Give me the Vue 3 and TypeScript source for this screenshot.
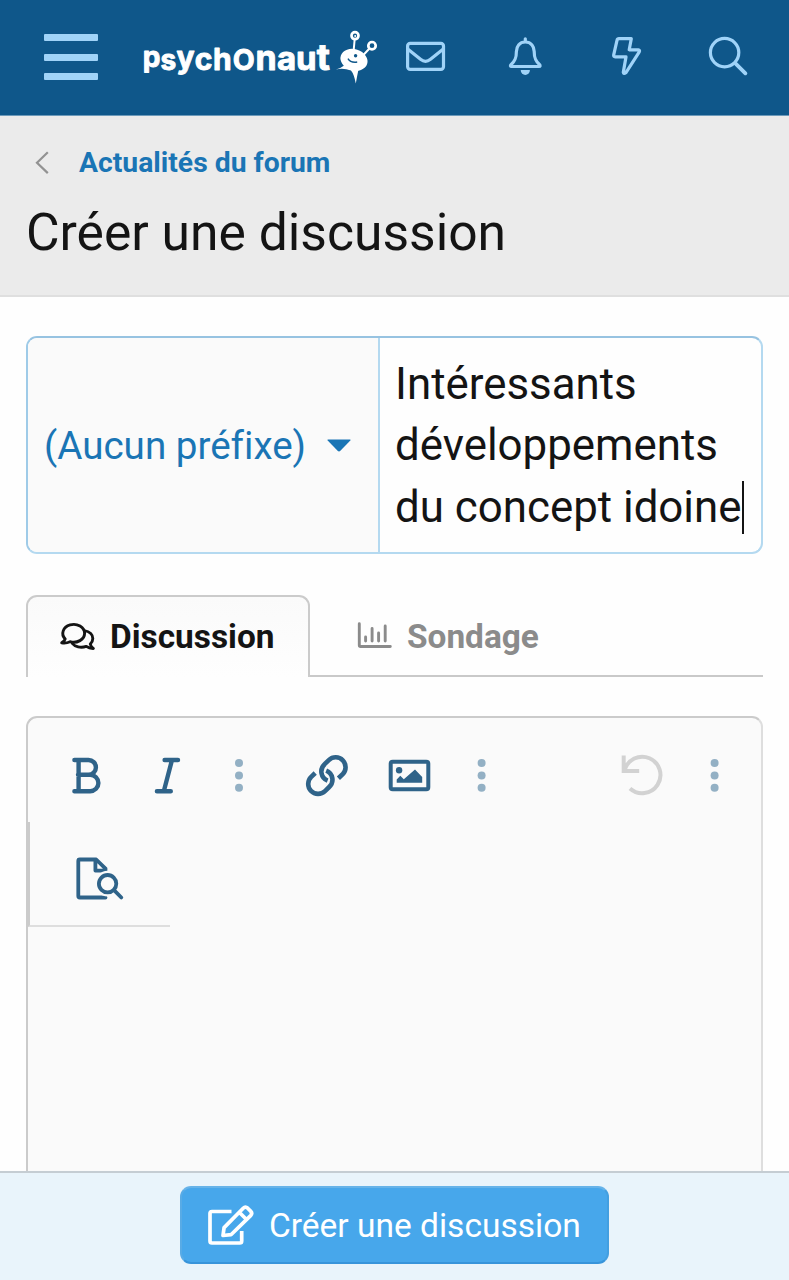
<script setup lang="ts">
import { ref } from 'vue'

const forumName = 'Actualités du forum'
const pageTitle = 'Créer une discussion'
const titleLines = ref<string[]>(['Intéressants', 'développements', 'du concept idoine'])
const logoLetters = [
  { ch: 'p', x: 142.8, y: 67, size: 28 },
  { ch: 's', x: 160.4, y: 70, size: 28 },
  { ch: 'y', x: 176.6, y: 67.6, size: 30 },
  { ch: 'c', x: 194.8, y: 70, size: 30 },
  { ch: 'h', x: 213, y: 69.6, size: 30 },
  { ch: 'O', x: 232.8, y: 70, size: 28.5 },
  { ch: 'n', x: 255.4, y: 70, size: 34 },
  { ch: 'a', x: 277, y: 70, size: 33 },
  { ch: 'u', x: 296, y: 70, size: 33 },
  { ch: 't', x: 316.8, y: 70.4, size: 36 },
]
</script>

<template>
  <div class="page">
    <header class="topbar">
      <button class="menu" aria-label="Menu"><i /><i /><i /></button>
      <svg class="logo" viewBox="140 25 242 64">
        <text class="wordmark"><tspan v-for="l in logoLetters" :key="l.x" :x="l.x" :y="l.y" :font-size="l.size">{{ l.ch }}</tspan></text>
        <g fill="#fff">
          <ellipse cx="354" cy="59.8" rx="13.8" ry="10.6" transform="rotate(18 354 59.8)" />
          <path d="M345 65 Q341 68 336 69.5 Q343 67.5 351 70.5 Q354 74 355.8 83.5 Q357.3 75 358.6 69 Z" />
        </g>
        <g fill="none" stroke="#fff" stroke-width="2.7">
          <circle cx="355" cy="35.7" r="3.5" /><circle cx="372" cy="45.7" r="3.7" />
          <path d="M353.6 51 354.6 40M362.5 56 369.2 48.7" stroke-width="2" />
        </g>
        <circle cx="355.2" cy="36" r="1" fill="#fff" />
        <circle cx="355.6" cy="55.8" r="1.7" fill="#0f578a" />
        <path d="M348 58.6 Q350.5 63 357.2 62" fill="none" stroke="#0f578a" stroke-width="1.5" />
      </svg>
      <nav class="actions">
        <svg class="mail" viewBox="405 36 42 40">
          <rect x="407.6" y="43.4" width="35.9" height="26" rx="2.6" />
          <path d="M408 49.2 420.5 59.3 Q425.5 63.3 430.5 59.3 L443 49.2" />
        </svg>
        <svg class="bell" viewBox="505 36 42 40">
          <path d="M525.3 42c-6 0-8.9 4.6-8.9 9.5 0 6.7-1.4 9.6-5.2 13-1.2 1.2-.8 2 .4 2h27.4c1.2 0 1.6-.8.4-2-3.8-3.4-5.2-6.3-5.2-13 0-4.9-2.9-9.5-8.9-9.5zM525.3 42v-3.2" />
          <path class="solid" d="M520.7 70h9.2a4.6 5 0 0 1-9.2 0z" />
        </svg>
        <svg class="bolt" viewBox="606 36 42 40">
          <path d="M618.9 38.7H631.3L629.2 49.8H638.2Q640.2 50.2 639.3 51.8L625.8 72.8Q623.6 74.4 623.3 72.2L626 56.9H615.3Q613.3 56.7 613.7 54.8L617 40.3Q617.4 38.7 618.9 38.7Z" />
        </svg>
        <svg class="find" viewBox="707 36 42 40">
          <circle cx="724.6" cy="52.6" r="14.2" /><path d="M735.4 63.4 745.4 73.3" stroke-width="3.8" />
        </svg>
      </nav>
    </header>

    <section class="heading">
      <a class="crumb">
        <svg viewBox="35 150 15 25"><path d="M47.8 152.3 37 162.7 47.8 173.1" /></svg>
        <span>{{ forumName }}</span>
      </a>
      <h1>{{ pageTitle }}</h1>
    </section>

    <main class="content">
      <div class="title-field">
        <div class="prefix">
          <span>(Aucun préfixe)</span>
          <svg viewBox="0 0 24 13"><path d="M1 .5H23Q24 .7 23.3 1.6L13.4 11.8Q12 13 10.6 11.8L.7 1.6Q0 .7 1 .5Z" /></svg>
        </div>
        <div class="subject">
          <div v-for="(line, i) in titleLines" :key="line" class="line">
            {{ line }}<i v-if="i === titleLines.length - 1" class="cursor" />
          </div>
        </div>
      </div>

      <div class="tabs">
        <div class="tab active">
          <svg viewBox="59 620 36 30">
            <path d="M61.7 641.8 Q64.7 640 65.2 637.9 A10.9 8.9 0 1 1 70 640.7 Q66 642.6 61.7 641.8Z" />
            <path d="M84.3 629.6C90 630.5 92.8 634 92.8 637.5Q92.8 640.7 90.3 643 Q90.8 645.8 93.3 647.5 Q89.3 647.6 86.3 645.4C80.5 647.4 75 645.6 72.3 642.3" />
          </svg>
          <span>Discussion</span>
        </div>
        <div class="tab">
          <svg viewBox="356 620 36 30"><path d="M359.3 623.8V645.3Q359.3 646.5 360.5 646.5H390.3M365.6 637V641M372.1 628.5V641M378.6 633V641M385.2 626V641" /></svg>
          <span>Sondage</span>
        </div>
      </div>

      <div class="editor">
        <div class="toolbar">
          <svg class="tools" viewBox="28 718 733 104">
            <g class="ink">
              <path class="letter" d="M74.4 760H88.5a7.4 7.4 0 0 1 0 14.8H78M88.5 774.8H90.2a8.2 8.2 0 0 1 0 16.4H74.4M78.6 760V791.2" />
              <path class="letter" d="M164.6 760H178M156.9 791.2H170.8M172 760 163.8 791.2" />
              <path class="chain" d="M338.4 778.2 342.6 774.3A9.8 9.8 0 0 0 328.8 760.1L324.6 764.2A9.8 9.8 0 0 0 327.6 780.6M315.2 773 311.2 776.9A9.8 9.8 0 0 0 325 791.1L329.2 787A9.8 9.8 0 0 0 326.2 770.6" />
              <rect x="390.7" y="761.8" width="37.6" height="27.5" rx="2" />
              <path class="solid" d="M396.7 782.8V779.4L400.3 775.7 403.8 779.2 415 769.6 422.2 777V782.8Z" />
              <circle class="solid" cx="399.1" cy="770.3" r="3.2" />
            </g>
            <g class="dots">
              <g v-for="x in [239, 481.6, 714.6]" :key="x">
                <circle v-for="y in [763, 775.4, 787.7]" :key="y" :cx="x" :cy="y" r="4" />
              </g>
            </g>
            <path class="undo" d="M623.7 755.4V770.9H639.2M624.6 770.4A18.2 18.2 0 1 1 630 788.4" />
          </svg>
          <div class="preview">
            <svg viewBox="74 856 52 46">
              <path d="M105.5 897.5H79.8Q78.3 897.5 78.3 896V861Q78.3 859.5 79.8 859.5H96.2L105.5 868.6V870.6H95.4V860" />
              <circle class="halo" cx="107.6" cy="883.7" r="11" />
              <circle cx="107.6" cy="883.7" r="8.7" /><path d="M114 890.2 121.3 897.5" />
            </svg>
          </div>
        </div>
      </div>
    </main>

    <footer class="submitbar">
      <button class="submit">
        <svg viewBox="206 1203 50 44">
          <path d="M231.5 1211.5H212Q210 1211.5 210 1213.5V1241Q210 1243 212 1243H239.7Q241.7 1243 241.7 1241V1231" />
          <path d="M223 1235.5 224.1 1227.6 243.2 1208.2Q245.4 1206 247.7 1208.2L250.6 1211.1Q252.8 1213.3 250.6 1215.6L231 1234.7ZM239.5 1212.5 246 1219" />
        </svg>
        <span>{{ pageTitle }}</span>
      </button>
    </footer>
  </div>
</template>

<style>
html,
body {
  margin: 0;
  overflow: hidden;
}
</style>

<style scoped>
* {
  box-sizing: border-box;
}
.page {
  display: flex;
  flex-direction: column;
  width: 789px;
  height: 1280px;
  overflow: hidden;
  background: #fefefe;
  font-family: Roboto, "Liberation Sans", sans-serif;
  font-variant-ligatures: none;
  color: #141414;
}
svg {
  display: block;
  flex: none;
}
button {
  margin: 0;
  padding: 0;
  border: 0;
  background: none;
  font: inherit;
}
.topbar {
  display: flex;
  align-items: flex-start;
  flex: none;
  height: 116px;
  padding-left: 44px;
  background: #0f578a;
  border-bottom: 1px solid #6c9aba;
}
.menu {
  display: flex;
  flex-direction: column;
  justify-content: space-between;
  width: 54px;
  height: 46px;
  margin-top: 34px;
}
.menu i {
  height: 7px;
  border-radius: 1px;
  background: #a0d3f8;
}
.logo {
  width: 242px;
  height: 64px;
  margin: 25px 0 0 42px;
}
.wordmark {
  fill: #fff;
  stroke: #fff;
  stroke-width: 0.9;
  stroke-linejoin: round;
  font-family: Inter, sans-serif;
  font-weight: 700;
}
.actions {
  display: flex;
  gap: 59px;
  margin: 36px 0 0 23px;
}
.actions svg {
  width: 42px;
  height: 40px;
  fill: none;
  stroke: #a0d3f8;
  stroke-width: 3.2;
  stroke-linecap: round;
  stroke-linejoin: round;
}
.actions .mail {
  margin-right: -1px;
}
.actions .solid {
  fill: #a0d3f8;
  stroke: none;
}
.heading {
  flex: none;
  height: 181px;
  padding: 26px 26px 0 24px;
  background: #ebebeb;
  border-bottom: 2px solid #dfdfdf;
}
.crumb {
  display: flex;
  align-items: center;
  height: 40px;
  padding-left: 11px;
  gap: 29px;
  color: #1a75b5;
  font-size: 28.3px;
  font-weight: 700;
}
.crumb svg {
  width: 15px;
  height: 25px;
  fill: none;
  stroke: #929292;
  stroke-width: 2.2;
}
h1 {
  margin: 21px 0 0 2px;
  font-size: 51.6px;
  line-height: 60px;
  font-weight: 400;
}
.content {
  display: flex;
  flex-direction: column;
  flex: 1;
  min-height: 0;
  padding: 39px 26px 0;
}
.title-field {
  display: flex;
  flex: none;
  height: 218px;
  border: 2px solid #b4d9f0;
  border-top-color: #97c3e1;
  border-left-color: #9fcbe8;
  border-radius: 11px;
  overflow: hidden;
}
.prefix {
  display: flex;
  align-items: center;
  width: 352px;
  padding-left: 16px;
  gap: 21px;
  border-right: 2px solid #b4d9f0;
  background: #fafafa;
  color: #1a75b5;
  font-size: 38.6px;
}
.prefix svg {
  width: 24px;
  height: 13px;
  fill: #1a75b5;
}
.subject {
  flex: 1;
  padding: 16px 0 0 15px;
  font-size: 43.85px;
  line-height: 61.4px;
}
.line {
  display: flex;
  align-items: center;
  white-space: nowrap;
}
.cursor {
  width: 2px;
  height: 53px;
  background: #141414;
}
.tabs {
  display: flex;
  flex: none;
  height: 82px;
  margin-top: 41px;
  background: linear-gradient(#c9c9c9, #c9c9c9) right bottom / 453px 2px no-repeat;
}
.tab {
  display: flex;
  align-items: center;
  gap: 15px;
  padding-left: 46px;
  color: #8b8b8b;
  font-size: 33.4px;
  font-weight: 700;
}
.tab svg {
  width: 36px;
  height: 30px;
  margin-top: -2px;
  fill: none;
  stroke: currentColor;
  stroke-width: 2.9;
  stroke-linecap: round;
  stroke-linejoin: round;
}
.tab.active {
  width: 284px;
  padding: 0 0 2px 31px;
  border: 2px solid #cbcbcb;
  border-bottom: 0;
  border-radius: 11px 11px 0 0;
  background: linear-gradient(#fafafa, #fefefe);
  color: #141414;
}
.tab.active svg {
  margin-top: -1px;
}
.editor {
  flex: 1;
  margin-top: 39px;
  border: 2px solid #cbcbcb;
  border-right-color: #dedede;
  border-bottom: 0;
  border-radius: 11px 11px 0 0;
  background: #fafafa;
}
.tools {
  width: 733px;
  height: 104px;
}
.ink {
  fill: none;
  stroke: #2f6389;
  stroke-width: 4;
  stroke-linecap: round;
  stroke-linejoin: round;
}
.ink .letter {
  stroke-width: 4.4;
}
.ink .chain {
  stroke-width: 4.6;
  stroke-linecap: butt;
}
.ink .solid {
  fill: #2f6389;
  stroke: none;
}
.dots {
  fill: #93b0c4;
}
.undo {
  fill: none;
  stroke: #d2d2d2;
  stroke-width: 4;
}
.preview {
  width: 142px;
  height: 105px;
  padding: 34px 0 0 44px;
  border-left: 2px solid #cbcbcb;
  border-bottom: 2px solid #dedede;
}
.preview svg {
  width: 52px;
  height: 46px;
  fill: none;
  stroke: #2f6389;
  stroke-width: 3.8;
  stroke-linecap: round;
  stroke-linejoin: round;
}
.preview .halo {
  fill: #fafafa;
  stroke: #fafafa;
}
.submitbar {
  display: flex;
  justify-content: center;
  align-items: flex-start;
  flex: none;
  height: 109px;
  padding-top: 13px;
  border-top: 2px solid #c5cdd3;
  background: #e9f4fb;
}
.submit {
  display: flex;
  align-items: center;
  width: 429px;
  height: 78px;
  padding-left: 24px;
  gap: 13px;
  border: 2px solid #439fe0;
  border-top-color: #66b3e9;
  border-left-color: #58abe6;
  border-bottom-color: #3894da;
  border-radius: 11px;
  background: #47a7eb;
  color: #fff;
  font-size: 33.5px;
}
.submit svg {
  width: 50px;
  height: 44px;
  fill: none;
  stroke: #fff;
  stroke-width: 3.7;
  stroke-linejoin: round;
}
</style>
